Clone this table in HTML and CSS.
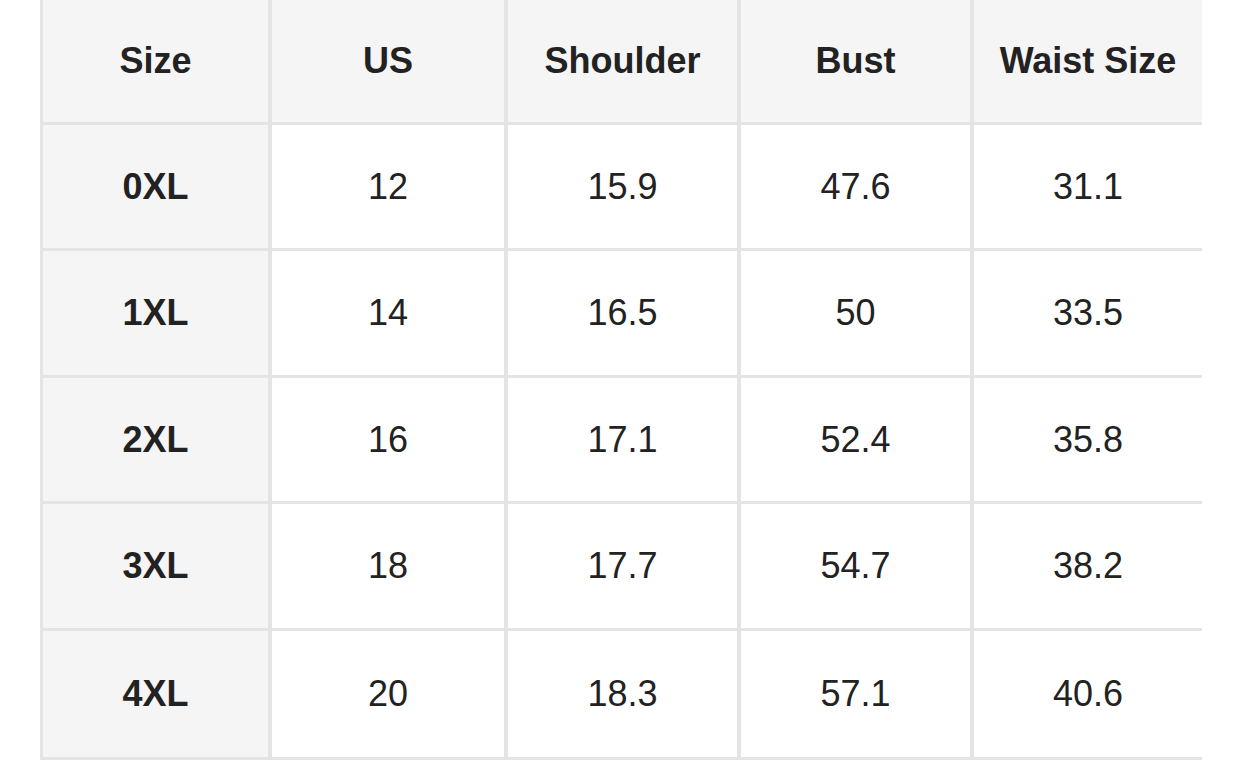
FILE: index.html
```html
<!DOCTYPE html>
<html lang="en">
<head>
<meta charset="utf-8">
<title>Size Chart</title>
<link rel="stylesheet" href="styles.css">
</head>
<body>
<div class="chart">
  <div class="cell head">Size</div>
  <div class="cell head">US</div>
  <div class="cell head">Shoulder</div>
  <div class="cell head">Bust</div>
  <div class="cell head">Waist Size</div>

  <div class="cell label">0XL</div>
  <div class="cell">12</div>
  <div class="cell">15.9</div>
  <div class="cell">47.6</div>
  <div class="cell">31.1</div>

  <div class="cell label">1XL</div>
  <div class="cell">14</div>
  <div class="cell">16.5</div>
  <div class="cell">50</div>
  <div class="cell">33.5</div>

  <div class="cell label">2XL</div>
  <div class="cell">16</div>
  <div class="cell">17.1</div>
  <div class="cell">52.4</div>
  <div class="cell">35.8</div>

  <div class="cell label">3XL</div>
  <div class="cell">18</div>
  <div class="cell">17.7</div>
  <div class="cell">54.7</div>
  <div class="cell">38.2</div>

  <div class="cell label">4XL</div>
  <div class="cell">20</div>
  <div class="cell">18.3</div>
  <div class="cell">57.1</div>
  <div class="cell">40.6</div>
</div>
</body>
</html>
```

FILE: styles.css
```css
html, body {
  margin: 0;
  padding: 0;
  background: #ffffff;
}

body {
  font-family: "Liberation Sans", Arial, sans-serif;
  color: #222222;
}

.chart {
  display: grid;
  grid-template-columns: 225px 232px 229px 229px 228px;
  grid-template-rows: 122px 123px 124px 123px 124px 126px;
  column-gap: 4px;
  row-gap: 3px;
  width: max-content;
  margin-left: 40px;
  padding-left: 3px;
  padding-bottom: 3px;
  background: #e4e4e4;
}

.cell {
  display: flex;
  align-items: center;
  justify-content: center;
  background: #ffffff;
  font-size: 36px;
  line-height: 1;
}

.head,
.label {
  background: #f5f5f5;
  font-weight: bold;
}
```
